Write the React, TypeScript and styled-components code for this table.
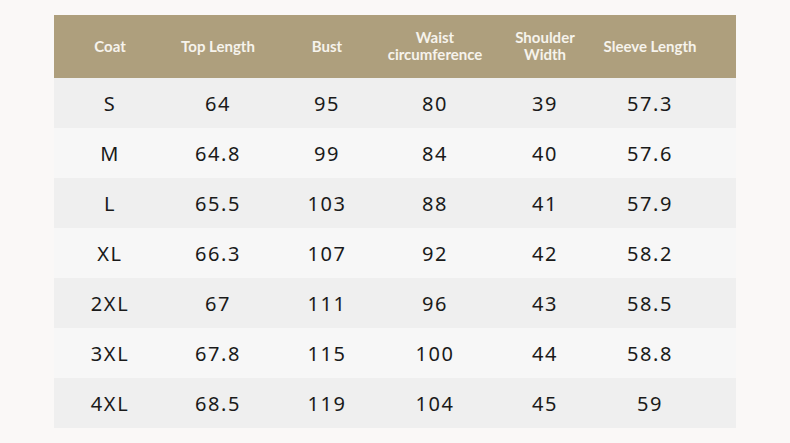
import React from "react";
import styled, { createGlobalStyle } from "styled-components";

const Global = createGlobalStyle`
  html, body { margin: 0; padding: 0; background: #faf8f7; }
  body { width: 790px; height: 443px; overflow: hidden; }
`;

const Page = styled.div`
  padding: 15px 54px 0 54px;
  box-sizing: border-box;
  width: 790px;
  height: 443px;
`;

const Table = styled.div`
  width: 682px;
  display: flex;
  flex-direction: column;
`;

const cols = "112px 104px 114px 102px 118px 92px 40px";

const HeaderRow = styled.div`
  display: grid;
  grid-template-columns: ${cols};
  height: 63px;
  background: #ae9f7d;
  align-items: center;
`;

const HeadCell = styled.div`
  display: flex;
  justify-content: center;
  margin-top: -1px;
`;

const HeadLabel = styled.span`
  flex: none;
  text-align: center;
  white-space: nowrap;
  font-family: Lato, "Liberation Sans", sans-serif;
  font-weight: 700;
  font-size: 15px;
  line-height: 17px;
  color: #f6f3ec;
`;

const Row = styled.div<{ $alt: boolean }>`
  display: grid;
  grid-template-columns: ${cols};
  height: 50px;
  align-items: center;
  background: ${(p) => (p.$alt ? "#f7f7f7" : "#efefef")};
`;

const Cell = styled.div`
  text-align: center;
  font-family: "Noto Sans", "DejaVu Sans", sans-serif;
  font-weight: 400;
  font-size: 20px;
  letter-spacing: 1.6px;
  color: #1a1a1a;
`;

const headers: React.ReactNode[] = [
  "Coat",
  "Top Length",
  "Bust",
  <>Waist<br />circumference</>,
  <>Shoulder<br />Width</>,
  "Sleeve Length",
];

const data = [
  ["S", "64", "95", "80", "39", "57.3"],
  ["M", "64.8", "99", "84", "40", "57.6"],
  ["L", "65.5", "103", "88", "41", "57.9"],
  ["XL", "66.3", "107", "92", "42", "58.2"],
  ["2XL", "67", "111", "96", "43", "58.5"],
  ["3XL", "67.8", "115", "100", "44", "58.8"],
  ["4XL", "68.5", "119", "104", "45", "59"],
];

export default function App() {
  return (
    <>
      <Global />
      <Page>
        <Table>
          <HeaderRow>
            {headers.map((h, i) => (
              <HeadCell key={i}>
                <HeadLabel>{h}</HeadLabel>
              </HeadCell>
            ))}
            <div />
          </HeaderRow>
          {data.map((r, i) => (
            <Row key={i} $alt={i % 2 === 1}>
              {r.map((c, j) => (
                <Cell key={j}>{c}</Cell>
              ))}
              <div />
            </Row>
          ))}
        </Table>
      </Page>
    </>
  );
}
